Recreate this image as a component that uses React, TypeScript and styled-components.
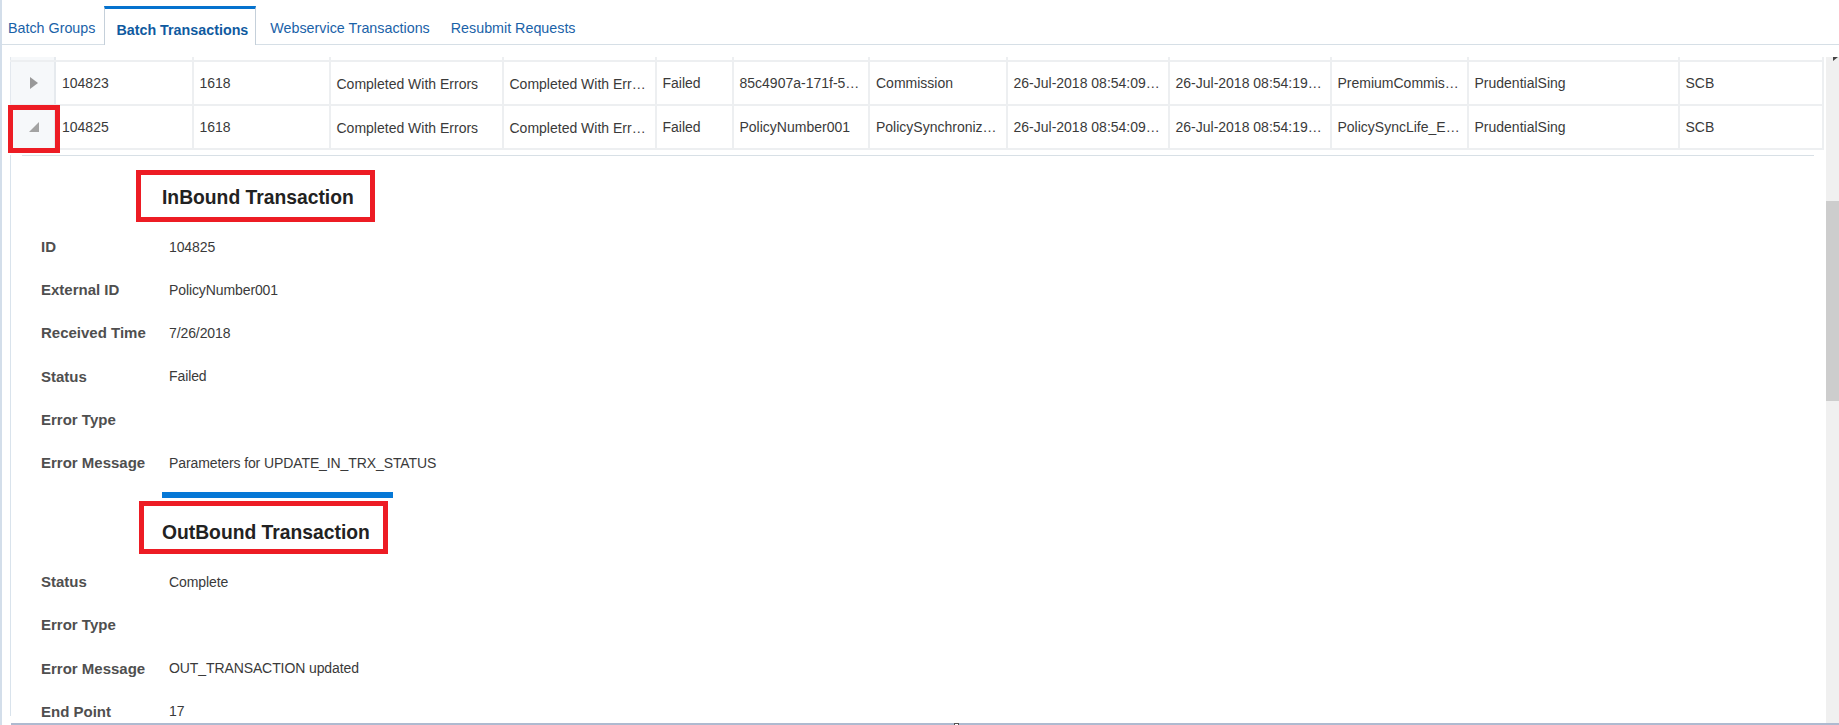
import React from 'react';
import styled, { createGlobalStyle } from 'styled-components';

const Global = createGlobalStyle`
  html, body { margin: 0; padding: 0; background: #fff; overflow: hidden; }
  body { font-family: "Liberation Sans", Arial, sans-serif; font-size: 14px; color: #333; }
`;

const COLS = '46px 137.5px 137px 173px 153px 77px 136.5px 137.5px 162px 162px 137px 211px 144px';

const Page = styled.div`
  width: 1839px;
  height: 725px;
  box-sizing: border-box;
  border-left: 2px solid #d3deea;
  display: flex;
  flex-direction: column;
  overflow: hidden;
  position: relative;
`;

const TabBar = styled.div`
  flex: none;
  height: 45px;
  box-sizing: border-box;
  border-bottom: 1px solid #d6dfe6;
  display: flex;
  align-items: stretch;
  padding: 6px 0 0 6px;
`;

const Tab = styled.div<{ $active?: boolean; $pad: string }>`
  display: flex;
  align-items: center;
  box-sizing: border-box;
  height: ${p => (p.$active ? '39px' : '38px')};
  padding: ${p => p.$pad};
  white-space: nowrap;
  font-size: 14.3px;
  color: ${p => (p.$active ? '#0f5aa0' : '#1a62a8')};
  font-weight: ${p => (p.$active ? 700 : 400)};
  background: #fff;
  ${p => p.$active && `
    border-top: 3px solid #0572ce;
    border-left: 1px solid #c5d0da;
    border-right: 1px solid #c5d0da;
    position: relative;
    z-index: 1;
  `}
`;

const Body = styled.div`
  flex: 1;
  min-height: 0;
  display: flex;
  margin-top: 12px;
`;

const Content = styled.div`
  flex: 1;
  min-width: 0;
  display: flex;
  flex-direction: column;
  padding-left: 8px;
  overflow: hidden;
  position: relative;
`;

const TableGrid = styled.div`
  flex: none;
  width: 1814px;
  position: relative;
`;

const Row = styled.div<{ $h: number; $top?: boolean; $noBottom?: boolean; $line?: number }>`
  display: grid;
  grid-template-columns: ${COLS};
  box-sizing: border-box;
  height: ${p => p.$h}px;
  line-height: ${p => p.$line ?? 40}px;
  ${p => !p.$noBottom && 'border-bottom: 2px solid #edeff1;'}
  ${p => p.$top && 'border-top: 2px solid #edeff1;'}
`;

const Cell = styled.div<{ $drop?: boolean }>`
  box-sizing: border-box;
  min-width: 0;
  padding: ${p => (p.$drop ? '1px' : '0')} 4px 0 6px;
  border-right: 2px solid #edeff1;
  white-space: nowrap;
  overflow: hidden;
  color: #3a3a3a;
`;

const ExpanderCell = styled.div`
  box-sizing: border-box;
  display: flex;
  align-items: center;
  justify-content: center;
  padding-left: 3px;
  background: #f6f8fa;
  border-left: 1px solid #e3e8ee;
  border-right: 2px solid #e6eaee;
`;

const Annotation = styled.div`
  position: absolute;
  box-sizing: border-box;
  left: -2px;
  top: 48px;
  width: 52px;
  height: 48px;
  border: 5px solid #ed1c24;
`;

const DetailPanel = styled.div`
  flex: 1;
  min-height: 0;
  margin-top: 5px;
  margin-bottom: 7px;
  border-left: 1px solid #d9e3ec;
`;

const Divider = styled.div`
  height: 1px;
  margin-left: 11px;
  width: 1792px;
  background: #d8e0e6;
`;

const HeadingBox = styled.div<{ $left: number; $w: number; $h: number; $pad: number; $top: number; $textDrop?: number }>`
  box-sizing: border-box;
  margin-left: ${p => p.$left}px;
  margin-top: ${p => p.$top}px;
  width: ${p => p.$w}px;
  height: ${p => p.$h}px;
  padding: ${p => p.$textDrop ?? 0}px 0 0 ${p => p.$pad}px;
  border: 5px solid #ed1c24;
  display: flex;
  align-items: center;
`;

const Heading = styled.h2`
  margin: 0;
  font-size: 19.3px;
  font-weight: 700;
  color: #222;
  white-space: nowrap;
`;

const Fields = styled.div<{ $top: number }>`
  margin-top: ${p => p.$top}px;
`;

const FieldRow = styled.div`
  display: grid;
  grid-template-columns: 128px 1fr;
  height: 43.2px;
  align-items: center;
  padding-left: 30px;
`;

const Label = styled.div`
  font-size: 15px;
  font-weight: 700;
  color: #4f4f4f;
`;

const Value = styled.div`
  color: #3a3a3a;
  letter-spacing: -0.1px;
`;

const BlueRule = styled.div`
  height: 6px;
  width: 231px;
  margin: 8px 0 0 151px;
  background: #0678d6;
`;

const ScrollTrack = styled.div`
  flex: none;
  width: 13px;
  background: #f0f0f0;
  position: relative;
  padding-top: 144px;
`;

const ScrollThumb = styled.div`
  height: 200px;
  background: #cdcdcd;
`;

const ScrollArrow = styled.svg`
  position: absolute;
  top: 0;
  left: 7px;
`;

const SplitterBar = styled.div`
  flex: none;
  height: 2px;
  background: #aebad0;
  margin-left: 9px;
  position: relative;
`;

const Grip = styled.div`
  position: absolute;
  left: 943px;
  top: 0;
  width: 5px;
  height: 2px;
  box-sizing: border-box;
  background: #fff;
  border: 1px solid #555;
  border-bottom: none;
`;

type RowData = string[];
const rows: RowData[] = [
  ['104823', '1618', 'Completed With Errors', 'Completed With Err…', 'Failed', '85c4907a-171f-5…', 'Commission', '26-Jul-2018 08:54:09…', '26-Jul-2018 08:54:19…', 'PremiumCommis…', 'PrudentialSing', 'SCB'],
  ['104825', '1618', 'Completed With Errors', 'Completed With Err…', 'Failed', 'PolicyNumber001', 'PolicySynchroniz…', '26-Jul-2018 08:54:09…', '26-Jul-2018 08:54:19…', 'PolicySyncLife_E…', 'PrudentialSing', 'SCB'],
];

const inbound: [string, string][] = [
  ['ID', '104825'],
  ['External ID', 'PolicyNumber001'],
  ['Received Time', '7/26/2018'],
  ['Status', 'Failed'],
  ['Error Type', ''],
  ['Error Message', 'Parameters for UPDATE_IN_TRX_STATUS'],
];

const outbound: [string, string][] = [
  ['Status', 'Complete'],
  ['Error Type', ''],
  ['Error Message', 'OUT_TRANSACTION updated'],
  ['End Point', '17'],
];

const FieldList = ({ items, top }: { items: [string, string][]; top: number }) => (
  <Fields $top={top}>
    {items.map(([k, v]) => (
      <FieldRow key={k}>
        <Label>{k}</Label>
        <Value>{v}</Value>
      </FieldRow>
    ))}
  </Fields>
);

export default function App() {
  return (
    <Page>
      <Global />
      <TabBar>
        <Tab $pad="5px 9px 0 0">Batch Groups</Tab>
        <Tab $active $pad="5px 7px 0 11px">Batch Transactions</Tab>
        <Tab $pad="5px 10px 0 14px">Webservice Transactions</Tab>
        <Tab $pad="5px 10px 0 11px">Resubmit Requests</Tab>
      </TabBar>
      <Body>
        <Content>
          <TableGrid>
            <Row $h={3} $noBottom>
              {Array.from({ length: 13 }).map((_, i) =>
                i === 0 ? <ExpanderCell key={i} /> : <Cell key={i} />
              )}
            </Row>
            {rows.map((r, idx) => (
              <Row key={r[0]} $h={idx === 0 ? 46 : 44} $top={idx === 0} $line={42}>
                <ExpanderCell>
                  {idx === 0 ? (
                    <svg width="8" height="12" viewBox="0 0 8 12"><path d="M0 0 L8 6 L0 12 Z" fill="#999" /></svg>
                  ) : (
                    <svg width="10" height="10" viewBox="0 0 10 10"><path d="M10 0 V10 H0 Z" fill="#a3a3a3" /></svg>
                  )}
                </ExpanderCell>
                {r.map((c, i) => (
                  <Cell key={i} $drop={i === 2 || i === 3}>{c}</Cell>
                ))}
              </Row>
            ))}
            <Annotation />
          </TableGrid>
          <DetailPanel>
            <Divider />
            <HeadingBox $top={14} $left={125} $w={239} $h={52} $pad={21} $textDrop={3}>
              <Heading>InBound Transaction</Heading>
            </HeadingBox>
            <FieldList items={inbound} top={3} />
            <BlueRule />
            <HeadingBox $top={3} $left={128} $w={249} $h={53} $pad={18} $textDrop={11}>
              <Heading>OutBound Transaction</Heading>
            </HeadingBox>
            <FieldList items={outbound} top={6} />
          </DetailPanel>
        </Content>
        <ScrollTrack>
          <ScrollArrow width="5" height="4" viewBox="0 0 5 4"><path d="M0 0 H5 L0 4 Z" fill="#444" /></ScrollArrow>
          <ScrollThumb />
        </ScrollTrack>
      </Body>
      <SplitterBar>
        <Grip />
      </SplitterBar>
    </Page>
  );
}
